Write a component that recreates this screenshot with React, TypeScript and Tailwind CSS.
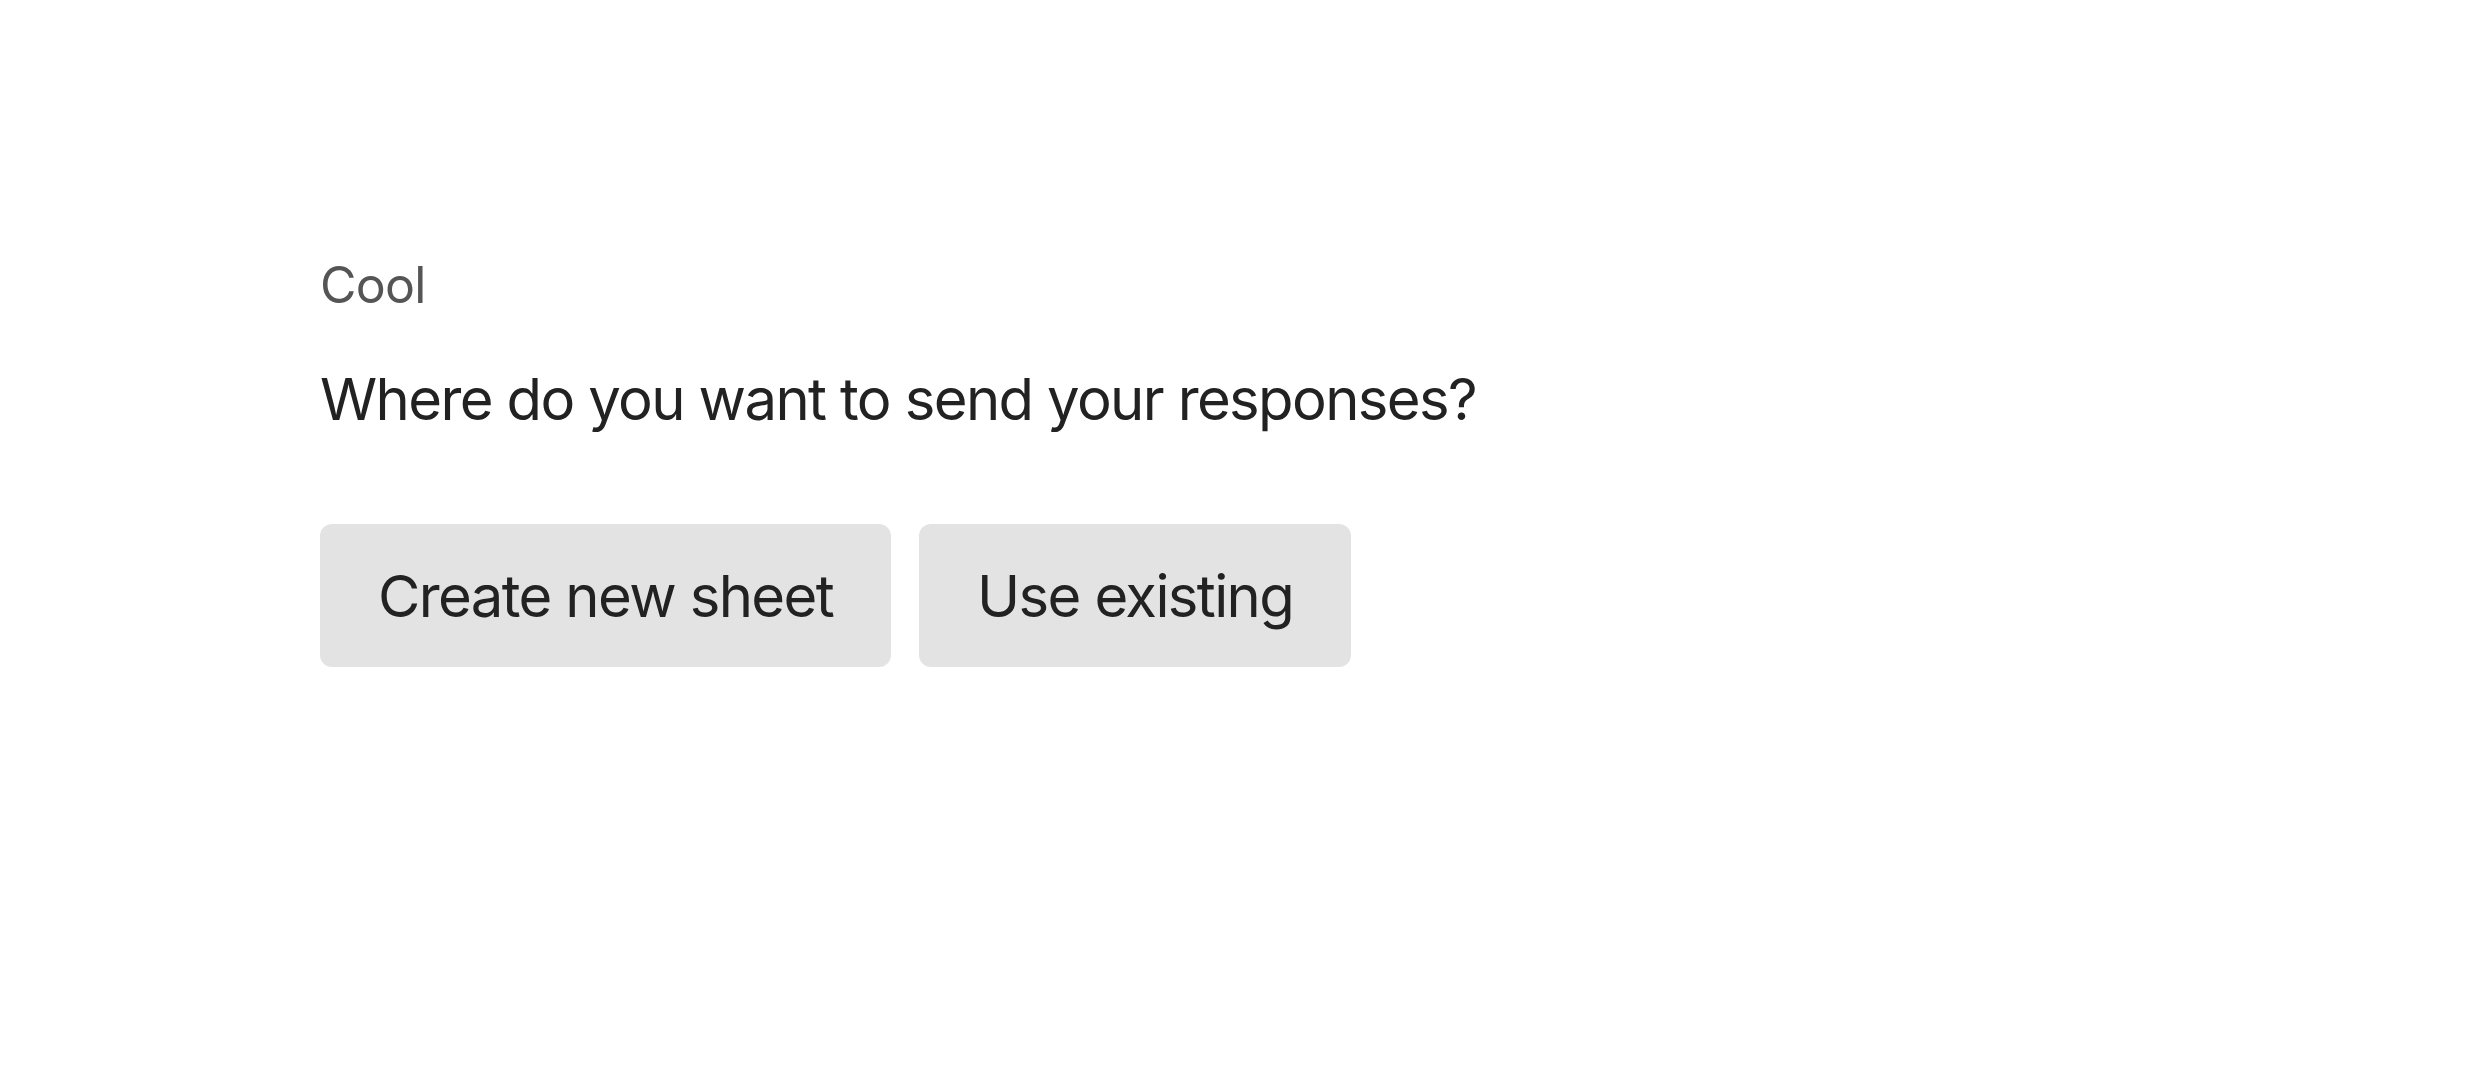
const FONT = "font-['Inter','Noto_Sans',sans-serif]";

function ChoiceButton({ label }: { label: string }) {
  return (
    <button
      type="button"
      className="flex h-[143px] items-center rounded-[12px] bg-[#e3e3e3] px-[58px] text-[58px] leading-[70px] tracking-[-0.028em] text-[#222222]"
    >
      {label}
    </button>
  );
}

export default function App() {
  return (
    <div className={`min-h-screen w-full bg-white ${FONT}`}>
      <div className="flex flex-col pl-[320px] pt-[255px]">
        <p className="text-[50px] leading-[60px] tracking-[-0.015em] text-[#555555]">Cool</p>
        <p className="mt-[49px] text-[58px] leading-[70px] tracking-[-0.028em] text-[#222222]">
          Where do you want to send your responses?
        </p>
        <div className="mt-[90px] flex gap-[28px]">
          <ChoiceButton label="Create new sheet" />
          <ChoiceButton label="Use existing" />
        </div>
      </div>
    </div>
  );
}
